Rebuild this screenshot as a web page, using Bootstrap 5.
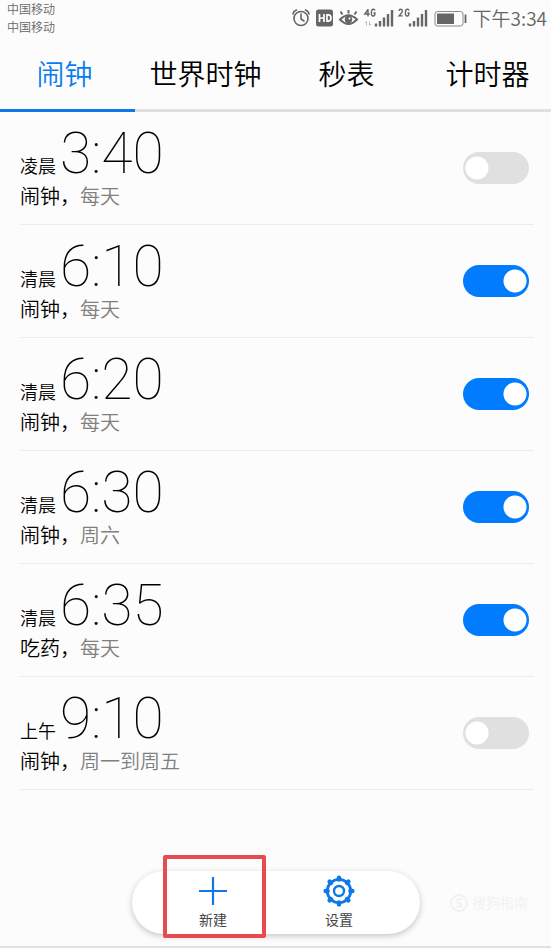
<!DOCTYPE html>
<html lang="zh-CN">
<head>
<meta charset="utf-8">
<meta name="viewport" content="width=device-width, initial-scale=1">
<title>闹钟</title>
<link href="https://cdn.jsdelivr.net/npm/bootstrap@5.3.0/dist/css/bootstrap.min.css" rel="stylesheet">
<style>
body{background:#fcfcfc;color:#000;font-family:Roboto,"Noto Sans CJK SC",sans-serif;font-weight:350}
.status-bar{height:36px;color:#666;padding:1px 4px 0 7px}
.carrier{font-size:12px;line-height:18px;color:#666}
.clock-now{font-family:"Noto Sans CJK SC",sans-serif;font-size:19px;line-height:34px}
.tab-strip{border-bottom:3px solid #e0e0e0;height:76px}
.tab-list{margin:0 -7px 0 -6px;height:76px}
.tab-list .nav-link{font-size:28px;line-height:80px;color:#000;height:76px;border-bottom:3px solid transparent;border-radius:0}
.tab-list .nav-link.active{color:#0a7cf0;border-color:#0f78e8}
.alarm-list{padding:0 17px 0 20px}
.alarm{height:113px;border-bottom:1px solid #ececec;padding-right:5px}
.alarm label{padding-top:13px}
.time-row{line-height:58px;height:58px}
.period{font-size:18px;margin-right:4px}
.digits{font-size:57px;font-weight:100}
.note{font-size:20px;line-height:28px}
.repeat{color:#808080}
.alarm .form-switch{padding:0 0 1px;margin:0;min-height:0}
.alarm .form-switch .form-check-input{width:66px;height:32px;margin:0;float:none;border:0;border-radius:16px;background-color:#e0e0e0;background-image:radial-gradient(circle,#fff 11px,transparent 12px);background-size:28px 32px;background-position:left center;display:block}
.alarm .form-switch .form-check-input:checked{background-color:#027cfe;background-position:right center}
.dock-area{border-bottom:2px solid #e2e2e2;padding:0 0 12px 1px;margin-bottom:1px}
.dock{background:#fff;border-radius:32px;height:63px;padding:0 18px;box-shadow:0 2px 6px rgba(0,0,0,.22)}
.dock-item{width:126px;height:63px;border:0;background:none;padding:4px 0 0;font-size:14px;line-height:18px;color:#444;display:flex;flex-direction:column;align-items:center;gap:4px}
.highlight{position:absolute;left:31px;top:-16px;width:103px;height:83px;border:4px solid #e54b4f;border-radius:2px;pointer-events:none}
.watermark{position:absolute;right:23px;bottom:34px;color:#f1f1f1;font-size:14px;line-height:18px}
</style>
<script src="https://cdn.jsdelivr.net/npm/bootstrap@5.3.0/dist/js/bootstrap.bundle.min.js"></script>
</head>
<body>
<div class="d-flex flex-column min-vh-100 overflow-hidden">
<header>
  <div class="status-bar d-flex justify-content-between">
    <div class="carrier"><div>中国移动</div><div>中国移动</div></div>
    <div class="d-flex align-items-start">
      <svg width="181" height="34" viewBox="0 0 181 34" fill="none" stroke="#666" aria-hidden="true">
        <g stroke-width="1.6"><circle cx="9" cy="17.500" r="7"/><path d="M9 13v5l3 2M1 13Q1.500 10 4.500 9M17 13Q16.500 10 13.500 9" stroke-linecap="round"/></g>
        <rect x="24" y="8.500" width="17" height="17" rx="2.500" fill="#666" stroke="none"/>
        <path d="M27.500 13v8M32 13v8M27.500 17h4.500M35 13.800h1c4 0 4 6.400 0 6.400h-1z" stroke="#fff" stroke-width="1.700"/>
        <path d="M48 18.500Q56.500 10 65 18.500Q56.500 27.500 48 18.500z" stroke-width="1.900"/><circle cx="56.500" cy="18.500" r="3.700" fill="#666" stroke="none"/><circle cx="57.500" cy="17.500" r="1" fill="#fff" stroke="none"/>
        <path d="M56.500 12.500V9M50.500 13.500l-2-3M62.500 13.500l2-3" stroke-width="1.900"/>
        <path d="M76 8.500L72.800 13h5M76 8v7.500M83 9.500q-.5-1.500-2-1.200-1.600.2-1.600 3.600t1.800 3.100Q83 15 83 12h-1.500M107 10q.2-1.700 1.700-1.700t1.600 1.800q0 1.400-3.200 4.800h3.700M117 9.500q-.5-1.500-2-1.200-1.600.2-1.600 3.600t1.800 3.100Q117 15 117 12h-1.500" stroke-width="1.400"/>
        <path d="M74.500 20.500v4M73 22l1.500-1.500M77.500 20.500v4l1.500-1.500" stroke="#bbb"/>
        <path d="M84 22.500v3M88 20V25.500M92 16.500v9M96 13V25.500M100 9V25.500M118 22.500v3M122 20V25.500M126 16.500v9M130 13V25.500M134 9V25.500" stroke-width="2.400"/>
        <rect x="143" y="10.500" width="28" height="14.500" rx="2.500" stroke="#888"/><rect x="145" y="12.500" width="17" height="10.500" fill="#666" stroke="none"/><path d="M173.500 13.500v8.500" stroke-width="1.800"/>
      </svg>
      <span class="clock-now">下午3:34</span>
    </div>
  </div>
  <div class="tab-strip">
    <nav class="tab-list nav nav-fill row g-0 text-center" aria-label="时钟">
      <a class="nav-link col-3 p-0 active" aria-current="page" href="#alarm">闹钟</a>
      <a class="nav-link col-3 p-0" href="#world">世界时钟</a>
      <a class="nav-link col-3 p-0" href="#stopwatch">秒表</a>
      <a class="nav-link col-3 p-0" href="#timer">计时器</a>
    </nav>
  </div>
</header>
<main id="alarm">
  <ul class="alarm-list list-unstyled mb-0">
    <li class="alarm d-flex justify-content-between">
      <label for="a1"><span class="time-row d-flex align-items-baseline"><span class="period">凌晨</span><span class="digits">3:40</span></span><span class="note d-block">闹钟，<span class="repeat">每天</span></span></label>
      <div class="form-check form-switch align-self-center"><input class="form-check-input" type="checkbox" role="switch" id="a1"></div>
    </li>
    <li class="alarm d-flex justify-content-between">
      <label for="a2"><span class="time-row d-flex align-items-baseline"><span class="period">清晨</span><span class="digits">6:10</span></span><span class="note d-block">闹钟，<span class="repeat">每天</span></span></label>
      <div class="form-check form-switch align-self-center"><input class="form-check-input" type="checkbox" role="switch" id="a2" checked></div>
    </li>
    <li class="alarm d-flex justify-content-between">
      <label for="a3"><span class="time-row d-flex align-items-baseline"><span class="period">清晨</span><span class="digits">6:20</span></span><span class="note d-block">闹钟，<span class="repeat">每天</span></span></label>
      <div class="form-check form-switch align-self-center"><input class="form-check-input" type="checkbox" role="switch" id="a3" checked></div>
    </li>
    <li class="alarm d-flex justify-content-between">
      <label for="a4"><span class="time-row d-flex align-items-baseline"><span class="period">清晨</span><span class="digits">6:30</span></span><span class="note d-block">闹钟，<span class="repeat">周六</span></span></label>
      <div class="form-check form-switch align-self-center"><input class="form-check-input" type="checkbox" role="switch" id="a4" checked></div>
    </li>
    <li class="alarm d-flex justify-content-between">
      <label for="a5"><span class="time-row d-flex align-items-baseline"><span class="period">清晨</span><span class="digits">6:35</span></span><span class="note d-block">吃药，<span class="repeat">每天</span></span></label>
      <div class="form-check form-switch align-self-center"><input class="form-check-input" type="checkbox" role="switch" id="a5" checked></div>
    </li>
    <li class="alarm d-flex justify-content-between">
      <label for="a6"><span class="time-row d-flex align-items-baseline"><span class="period">上午</span><span class="digits">9:10</span></span><span class="note d-block">闹钟，<span class="repeat">周一到周五</span></span></label>
      <div class="form-check form-switch align-self-center"><input class="form-check-input" type="checkbox" role="switch" id="a6"></div>
    </li>
  </ul>
</main>
<footer class="dock-area position-relative d-flex justify-content-center mt-auto">
  <div class="dock position-relative d-flex">
    <button type="button" class="dock-item"><svg width="28" height="32" viewBox="0 0 28 32" fill="none" stroke="#0f78e8" stroke-width="2.200" aria-hidden="true"><path d="M14 2v28M0 16h28"/></svg>新建</button>
    <button type="button" class="dock-item"><svg width="32" height="32" viewBox="0 0 32 32" fill="none" stroke="#0f78e8" aria-hidden="true"><circle cx="16" cy="16" r="11.700" stroke-width="2.800"/><circle cx="16" cy="16" r="5" stroke-width="2.400"/><path d="M16 2.600v2M16 27.400v2M2.600 16h2M27.400 16h2M6.600 6.600l1.400 1.400M24 24l1.400 1.400M25.400 6.600l-1.400 1.400M8 24l-1.400 1.400" stroke-width="4.400" stroke-linecap="round"/></svg>设置</button>
    <span class="highlight"></span>
  </div>
  <div class="watermark"><div class="d-flex align-items-center gap-1"><svg width="18" height="18" viewBox="0 0 18 18" fill="none" stroke="#f1f1f1" stroke-width="2" aria-hidden="true"><circle cx="9" cy="9" r="8"/><path d="M12 6Q9 4 7 6t2 3 2 3-5 0"/></svg>搜狗指南</div></div>
</footer>
</div>
</body>
</html>
